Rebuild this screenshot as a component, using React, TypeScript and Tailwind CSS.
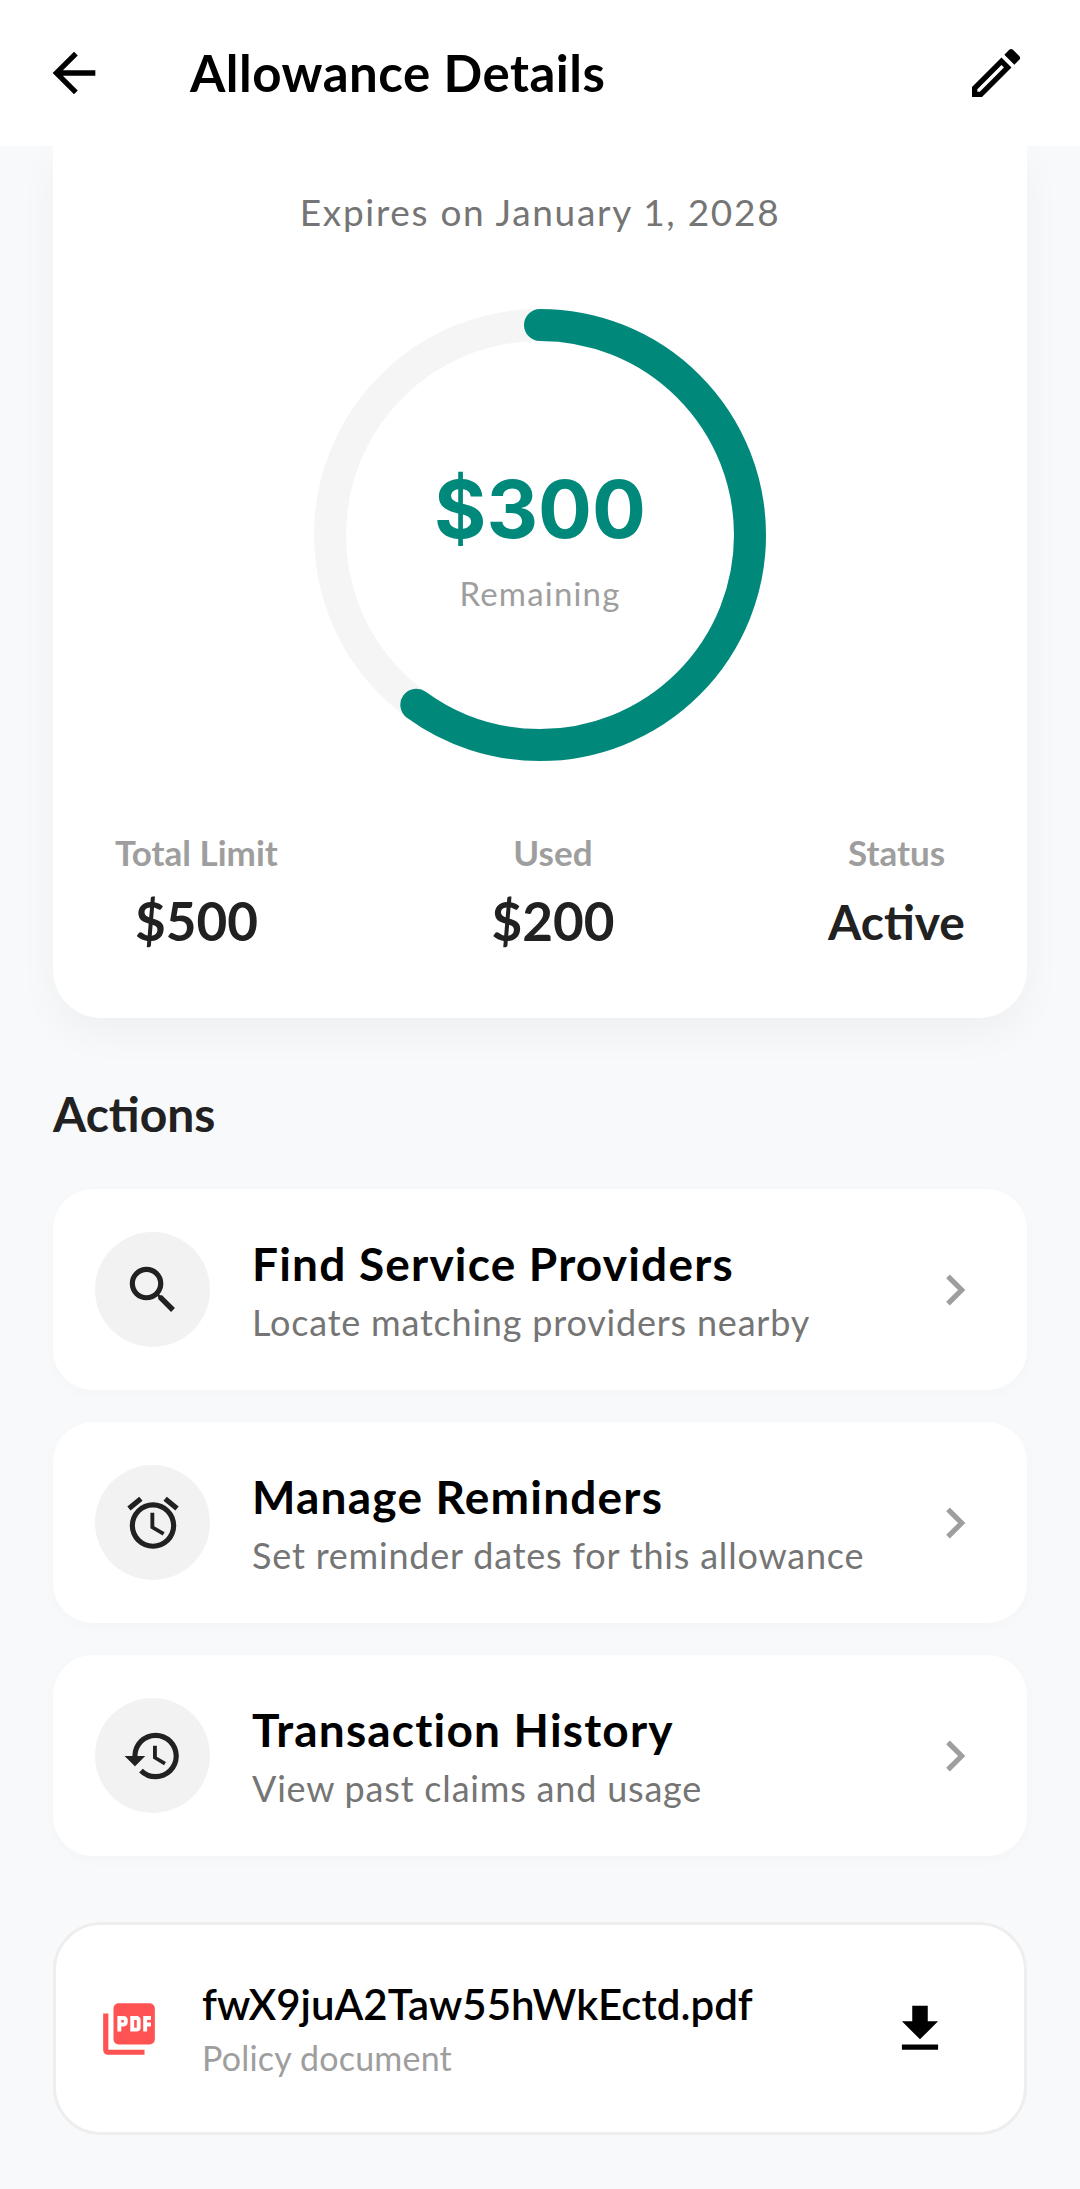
import { MdArrowBack, MdOutlineEdit, MdSearch, MdOutlineAlarm, MdHistory, MdChevronRight, MdPictureAsPdf, MdFileDownload } from 'react-icons/md';

const actions = [
    { title: 'Find Service Providers', sub: 'Locate matching providers nearby', Icon: MdSearch },
    { title: 'Manage Reminders', sub: 'Set reminder dates for this allowance', Icon: MdOutlineAlarm },
    { title: 'Transaction History', sub: 'View past claims and usage', Icon: MdHistory },
];

export default function App() {
    return (
        <div className="h-[2189px] overflow-hidden bg-[#f8f9fb] font-['Lato',sans-serif] flex flex-col">
            {/* Header */}
            <div className="h-[146px] shrink-0 bg-white flex items-center pl-[42px] pr-[52px] relative z-10">
                <MdArrowBack className="w-[64px] h-[64px] text-black" />
                <h1 className="ml-[84px] text-[51px] leading-none font-bold text-black tracking-[0.5px] -translate-y-[1px]">Allowance Details</h1>
                <MdOutlineEdit className="ml-auto w-[64px] h-[64px] text-black" />
            </div>

            <div className="px-[53px] flex flex-col">
                {/* Summary card */}
                <div className="bg-white rounded-b-[48px] shadow-[0_16px_40px_rgba(0,0,0,0.04)] h-[872px] flex flex-col items-center pt-[44px]">
                    <p className="text-[37px] leading-[44px] text-[#757575] tracking-[1.7px]">Expires on January 1, 2028</p>
                    <div className="relative mt-[75px] w-[452px] h-[452px]">
                        <svg viewBox="0 0 452 452" className="w-full h-full">
                            <circle cx="226" cy="226" r="210" fill="none" stroke="#f5f5f5" strokeWidth="32" />
                            <circle
                                cx="226"
                                cy="226"
                                r="210"
                                fill="none"
                                stroke="#00897b"
                                strokeWidth="32"
                                strokeLinecap="round"
                                strokeDasharray="791.68 1319.47"
                                transform="rotate(-90 226 226)"
                            />
                        </svg>
                        <div className="absolute inset-0 flex flex-col items-center pt-[155px]">
                            <span className="text-[80px] leading-[90px] font-bold text-[#00897b] font-['Inter',sans-serif]">$300</span>
                            <span className="mt-[19px] text-[33px] leading-[40px] text-[#9e9e9e] tracking-[1.2px]">Remaining</span>
                        </div>
                    </div>
                    <div className="w-full mt-[71px] px-[62px] flex justify-between">
                        <div className="flex flex-col items-center">
                            <span className="text-[35px] leading-[40px] font-bold text-[#9e9e9e]">Total Limit</span>
                            <span className="mt-[21px] text-[53px] leading-[56px] font-bold text-[#212121]">$500</span>
                        </div>
                        <div className="flex flex-col items-center">
                            <span className="text-[35px] leading-[40px] font-bold text-[#9e9e9e]">Used</span>
                            <span className="mt-[21px] text-[53px] leading-[56px] font-bold text-[#212121]">$200</span>
                        </div>
                        <div className="flex flex-col items-center">
                            <span className="text-[35px] leading-[40px] font-bold text-[#9e9e9e]">Status</span>
                            <span className="mt-[22px] text-[48px] leading-[56px] font-bold text-[#212121]">Active</span>
                        </div>
                    </div>
                </div>

                <h2 className="mt-[70px] text-[48px] leading-[52px] font-bold text-[#212121]">Actions</h2>

                {/* Actions */}
                <div className="mt-[49px] flex flex-col gap-[32px]">
                    {actions.map(({ title, sub, Icon }) => (
                        <div key={title} className="h-[201px] bg-white rounded-[40px] shadow-[0_4px_16px_rgba(0,0,0,0.02)] flex items-center px-[42px]">
                            <div className="w-[115px] h-[115px] rounded-full bg-[#f2f2f2] flex items-center justify-center shrink-0">
                                <Icon className="w-[62px] h-[62px] text-[#212121]" />
                            </div>
                            <div className="ml-[42px] flex flex-col">
                                <span className="text-[46px] leading-[56px] font-bold text-black tracking-[1.2px]">{title}</span>
                                <span className="mt-[8px] text-[36px] leading-[44px] text-[#757575] tracking-[0.8px]">{sub}</span>
                            </div>
                            <MdChevronRight className="ml-auto -mr-[1px] w-[62px] h-[62px] text-[#9e9e9e]" />
                        </div>
                    ))}
                </div>

                {/* Policy document */}
                <div className="mt-[66px] h-[213px] bg-white border-[3px] border-[#eeeeee] rounded-[48px] flex items-center pl-[42px] pr-[73px]">
                    <MdPictureAsPdf className="w-[62px] h-[62px] text-[#ff5252] shrink-0" />
                    <div className="ml-[42px] flex flex-col">
                        <span className="text-[42px] leading-[52px] font-semibold text-black">fwX9juA2Taw55hWkEctd.pdf</span>
                        <span className="mt-[6px] text-[34px] leading-[44px] text-[#9e9e9e] tracking-[0.2px]">Policy document</span>
                    </div>
                    <MdFileDownload className="ml-auto w-[62px] h-[62px] text-black shrink-0" />
                </div>
            </div>
        </div>
    );
}
